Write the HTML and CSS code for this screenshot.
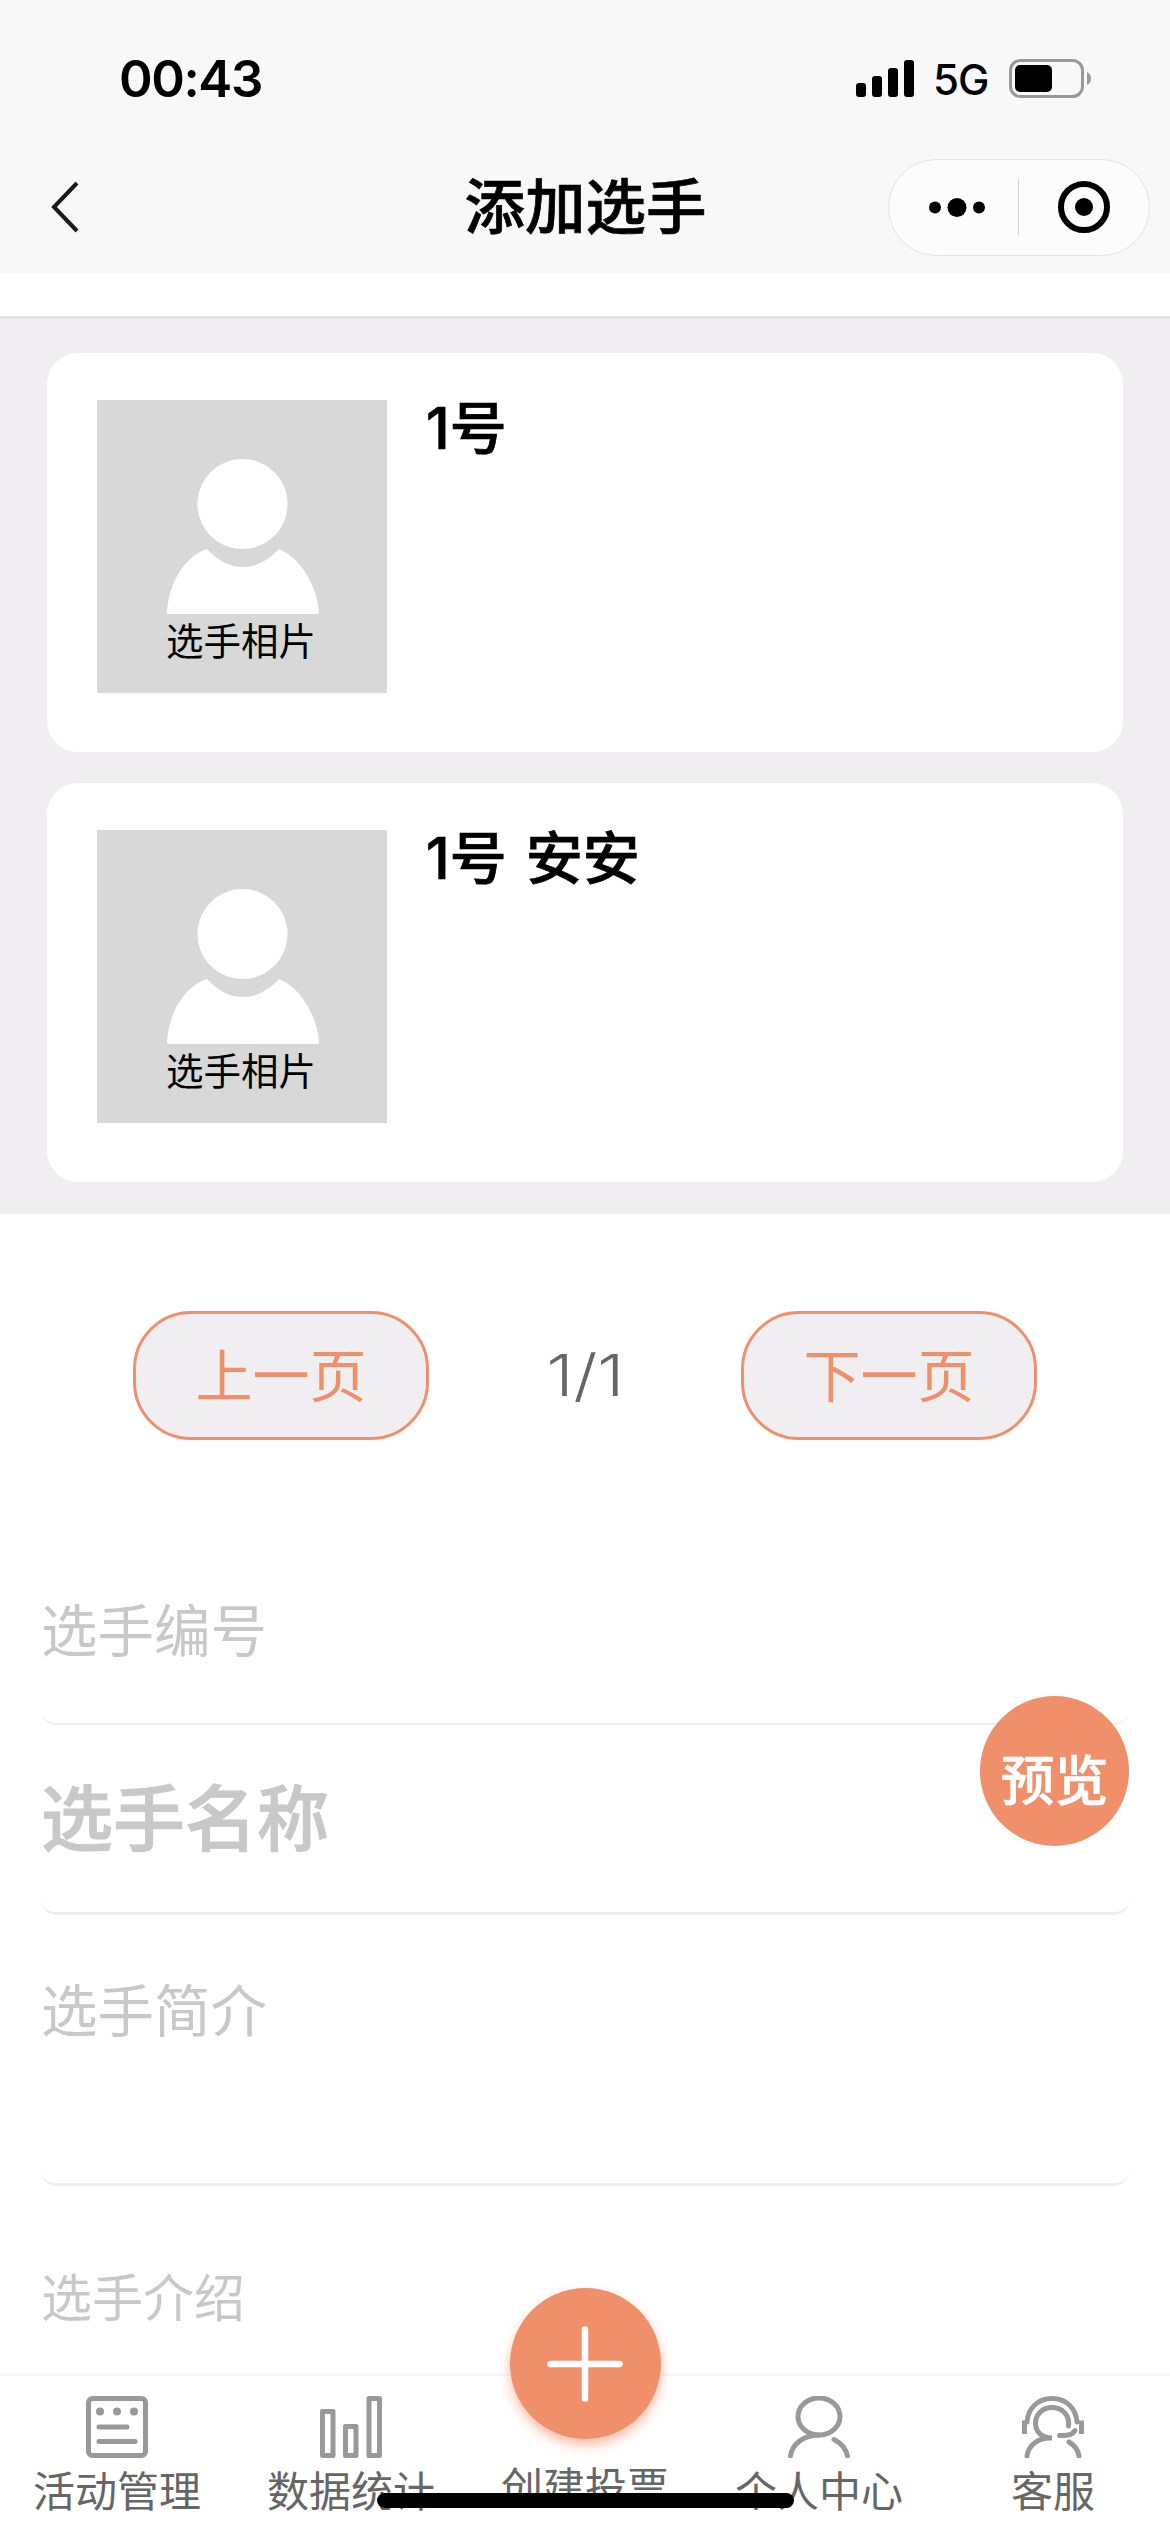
FILE: index.html
```html
<!DOCTYPE html>
<html lang="zh-CN">
<head>
    <meta charset="UTF-8">
    <meta name="viewport" content="width=device-width, initial-scale=1.0">
    <title>添加选手</title>
    <link rel="stylesheet" href="styles.css">
</head>
<body>
    <div class="page">
        <header class="header">
            <div class="status-bar">
                <span class="time">00:43</span>
                <div class="status-icons">
                    <svg class="signal" width="58" height="37" viewBox="0 0 58 37">
                        <rect x="0" y="23" width="10" height="14" rx="3"/>
                        <rect x="16" y="16" width="10" height="21" rx="3"/>
                        <rect x="32" y="8" width="10" height="29" rx="3"/>
                        <rect x="48" y="0" width="10" height="37" rx="3"/>
                    </svg>
                    <span class="network">5G</span>
                    <svg class="battery" width="83" height="39" viewBox="0 0 83 39">
                        <rect x="1.5" y="1.5" width="72" height="36" rx="10" fill="none" stroke="#999" stroke-width="3"/>
                        <rect x="6" y="6" width="37" height="27" rx="5"/>
                        <path d="M78 13 Q82 15 82 19.5 Q82 24 78 26 Z" fill="#999"/>
                    </svg>
                </div>
            </div>
            <div class="nav-bar">
                <svg class="back" width="28" height="52" viewBox="0 0 28 52">
                    <path d="M26 2 L3 26 L26 50" fill="none" stroke="#1a1a1a" stroke-width="4"/>
                </svg>
                <h1 class="title">添加选手</h1>
                <div class="capsule">
                    <svg width="260" height="95" viewBox="0 0 260 95">
                        <circle cx="46" cy="47.5" r="6"/>
                        <circle cx="68" cy="47.5" r="9.5"/>
                        <circle cx="90" cy="47.5" r="6"/>
                        <path d="M129.5 19 V75" stroke="#d0d0d0" stroke-width="1"/>
                        <circle cx="195" cy="47" r="23" fill="none" stroke="#000" stroke-width="6"/>
                        <circle cx="195" cy="47" r="9"/>
                    </svg>
                </div>
            </div>
        </header>

        <main class="content">
            <section class="player-list">
                <div class="player-card">
                    <div class="photo">
                        <svg width="152" height="158" viewBox="0 0 152 158" fill="#fff">
                            <circle cx="76.5" cy="47" r="45"/>
                            <path d="M1 155 C3 125 19 99 41 92 C63 116 91 116 113 92 C135 101 151 129 153 155 Q153 157 151 157 H3 Q1 157 1 155 Z"/>
                        </svg>
                        <span class="photo-text">选手相片</span>
                    </div>
                    <div class="player-name">1号</div>
                </div>
                <div class="player-card">
                    <div class="photo">
                        <svg width="152" height="158" viewBox="0 0 152 158" fill="#fff">
                            <circle cx="76.5" cy="47" r="45"/>
                            <path d="M1 155 C3 125 19 99 41 92 C63 116 91 116 113 92 C135 101 151 129 153 155 Q153 157 151 157 H3 Q1 157 1 155 Z"/>
                        </svg>
                        <span class="photo-text">选手相片</span>
                    </div>
                    <div class="player-name">1号 安安</div>
                </div>
            </section>

            <div class="pager">
                <button class="page-button">上一页</button>
                <span class="page-number">1/1</span>
                <button class="page-button">下一页</button>
            </div>

            <form class="player-form">
                <input class="field field-number" type="text" placeholder="选手编号">
                <input class="field field-name" type="text" placeholder="选手名称">
                <textarea class="field field-intro" placeholder="选手简介"></textarea>
                <div class="editor">选手介绍</div>
            </form>
        </main>

        <nav class="tab-bar">
            <div class="tab">
                <svg width="62" height="62" viewBox="0 0 62 62" fill="none" stroke="#999" stroke-width="5" stroke-linecap="round">
                    <rect x="2.5" y="2.5" width="57" height="57" rx="4"/>
                    <path d="M13 31 H41 M13 45.5 H49"/>
                    <g fill="#999" stroke="none">
                        <circle cx="14" cy="15.5" r="4"/>
                        <circle cx="31" cy="15.5" r="4"/>
                        <circle cx="48" cy="15.5" r="4"/>
                    </g>
                </svg>
                <span>活动管理</span>
            </div>
            <div class="tab">
                <svg width="62" height="62" viewBox="0 0 62 62" fill="none" stroke="#999" stroke-width="5" stroke-linejoin="round">
                    <rect x="2.5" y="15.5" width="10.5" height="44"/>
                    <rect x="25.5" y="30.5" width="10.5" height="29"/>
                    <rect x="49" y="2.5" width="10.5" height="57"/>
                </svg>
                <span>数据统计</span>
            </div>
            <div class="tab tab-create">
                <div class="create-button">
                    <svg width="76" height="76" viewBox="0 0 76 76">
                        <path d="M38 3.5 V72.5 M3.5 38 H72.5" stroke="#fff" stroke-width="6.5" stroke-linecap="round"/>
                    </svg>
                </div>
                <span>创建投票</span>
            </div>
            <div class="tab">
                <svg width="62" height="62" viewBox="0 0 62 62" fill="none" stroke="#999" stroke-width="5" stroke-linecap="round">
                    <ellipse cx="31" cy="20.5" rx="21" ry="18.5"/>
                    <path d="M31 39 C16 39 4 48 2.5 60 M46 43.5 C53 47 58 53 59.5 60"/>
                </svg>
                <span>个人中心</span>
            </div>
            <div class="tab">
                <svg width="62" height="62" viewBox="0 0 62 62" fill="none" stroke="#999" stroke-width="5" stroke-linecap="round">
                    <path d="M5 26 C6 12 16 2.5 30 2.5 C44 2.5 54 12 55 26"/>
                    <path d="M2.5 25 V38 M59.5 25 V38" stroke-linecap="butt"/>
                    <path d="M6 26 H0 M55 26 H62" stroke-width="3" stroke-linecap="butt"/>
                    <path d="M46.5 30 C48 19 40 11.5 30 11.5 C20 11.5 13.5 19 13.5 27 C13.5 36 20 42 30 42 C17 41 6.5 49 5 60"/>
                    <path d="M37.5 39.5 C45 40 51 38 53 34.5 M47 46 C52 49 56 54 57 60"/>
                </svg>
                <span>客服</span>
            </div>
        </nav>

        <div class="preview-button">预览</div>
        <div class="home-indicator"></div>
    </div>
</body>
</html>
```

FILE: styles.css
```css
* {
    box-sizing: border-box;
}
body {
    margin: 0;
    background-color: #fff;
    color: #000;
    font-family: Inter, "Noto Sans CJK SC", sans-serif;
}
.page {
    position: relative;
    display: flex;
    flex-direction: column;
    width: 1170px;
    height: 2532px;
    overflow: hidden;
}
svg {
    display: block;
    flex-shrink: 0;
}

/* header */
.header {
    height: 273px;
    background-color: #f8f8f8;
}
.status-bar {
    display: flex;
    justify-content: space-between;
    align-items: center;
    height: 141px;
    padding: 15px 78px 0 119px;
}
.time {
    font-size: 51px;
    font-weight: 600;
    letter-spacing: -1.4px;
}
.status-icons {
    display: flex;
    align-items: center;
}
.network {
    width: 95px;
    padding-left: 19px;
    padding-top: 3px;
    font-size: 42px;
    font-weight: 450;
    letter-spacing: -1px;
}
.nav-bar {
    display: grid;
    grid-template-columns: 1fr auto 1fr;
    align-items: center;
    height: 132px;
    padding: 0 20px 0 51px;
}
.title {
    margin: 0;
    padding-top: 1px;
    font-size: 60.5px;
    font-weight: 500;
    line-height: 1;
    transform: translateX(-15px);
    -webkit-text-stroke: 0.7px currentColor;
}
.capsule {
    justify-self: end;
    width: 262px;
    height: 97px;
    border: 1px solid #e3e3e3;
    border-radius: 49px;
    background-color: #fcfcfc;
}

/* players */
.content {
    flex: 1;
    padding-top: 43px;
    overflow: hidden;
}
.player-list {
    display: flex;
    flex-direction: column;
    gap: 31px;
    height: 898px;
    padding: 34px 47px 0;
    border-top: 3px solid #e3e3e3;
    background-color: #f0eef1;
}
.player-card {
    display: flex;
    gap: 39px;
    height: 399px;
    padding: 47px 50px;
    border-radius: 31px;
    background-color: #fff;
}
.photo {
    display: flex;
    flex-direction: column;
    align-items: center;
    width: 290px;
    height: 293px;
    padding-top: 57px;
    background-color: #d8d8d8;
}
.photo svg {
    overflow: visible;
}
.photo-text {
    margin-top: 8px;
    margin-right: 2px;
    font-size: 37.5px;
    line-height: 38px;
}
.player-name {
    font-size: 57px;
    font-weight: 500;
    line-height: 57px;
    word-spacing: 4px;
    -webkit-text-stroke: 0.7px currentColor;
}

/* pager */
.pager {
    display: flex;
    justify-content: space-between;
    align-items: center;
    margin-top: 97px;
    padding: 0 133px;
}
.page-button {
    width: 296px;
    height: 129px;
    padding: 0 0 7px;
    border: 3px solid #f0906a;
    border-radius: 58px;
    background-color: #f0eef1;
    color: #f0906a;
    font-family: inherit;
    font-size: 57px;
    font-weight: 400;
}
.page-number {
    color: #666;
    font-size: 57px;
    font-weight: 300;
    transform: scaleX(1.2);
}

/* form */
.player-form {
    display: flex;
    flex-direction: column;
    padding: 97px 41px 0;
}
.field {
    padding: 0;
    border: 0 solid #eeedef;
    border-radius: 15px;
    outline: none;
    background: none;
    font-family: inherit;
    resize: none;
}
.field::placeholder,
.editor {
    color: #c8c8c8;
    opacity: 1;
}
.field-number {
    height: 188px;
    padding-top: 2px;
    border-bottom-width: 2px;
    font-size: 56.5px;
    font-weight: 400;
}
.field-name {
    height: 190px;
    border-bottom-width: 3px;
    font-size: 72px;
    font-weight: 500;
    -webkit-text-stroke: 1px #c8c8c8;
}
.field-intro {
    height: 202px;
    margin-top: 69px;
    border-bottom: 3px solid #eeefef;
    font-size: 56.5px;
    font-weight: 400;
    line-height: 56px;
    overflow: hidden;
}
.editor {
    padding-top: 87px;
    font-size: 51px;
    font-weight: 400;
    line-height: 52px;
}

/* bottom tabs */
.tab-bar {
    display: flex;
    height: 159px;
    border-top: 3px solid #f7f7f7;
    background-color: #fff;
}
.tab {
    display: flex;
    flex: 1;
    flex-direction: column;
    align-items: center;
    gap: 13px;
    padding-top: 20px;
    color: #666;
    font-size: 42px;
    font-weight: 400;
    line-height: 42px;
}
.tab-create {
    gap: 28px;
    padding-top: 0;
    margin-top: -88px;
}
.create-button {
    display: flex;
    flex-shrink: 0;
    justify-content: center;
    align-items: center;
    width: 151px;
    height: 151px;
    border-radius: 50%;
    background-color: #f0906a;
    box-shadow: 0 6px 12px rgba(240, 144, 106, 0.6);
}

/* floating items over the page */
.preview-button {
    position: absolute;
    top: 1696px;
    left: 980px;
    width: 149px;
    height: 150px;
    padding-top: 20px;
    border-radius: 50%;
    background-color: #f0906a;
    color: #fff;
    font-size: 54px;
    font-weight: 500;
    line-height: 132px;
    text-align: center;
    -webkit-text-stroke: 0.6px currentColor;
}
.home-indicator {
    position: absolute;
    bottom: 24px;
    left: 377px;
    width: 417px;
    height: 15px;
    border-radius: 8px;
    background-color: #000;
}
```
